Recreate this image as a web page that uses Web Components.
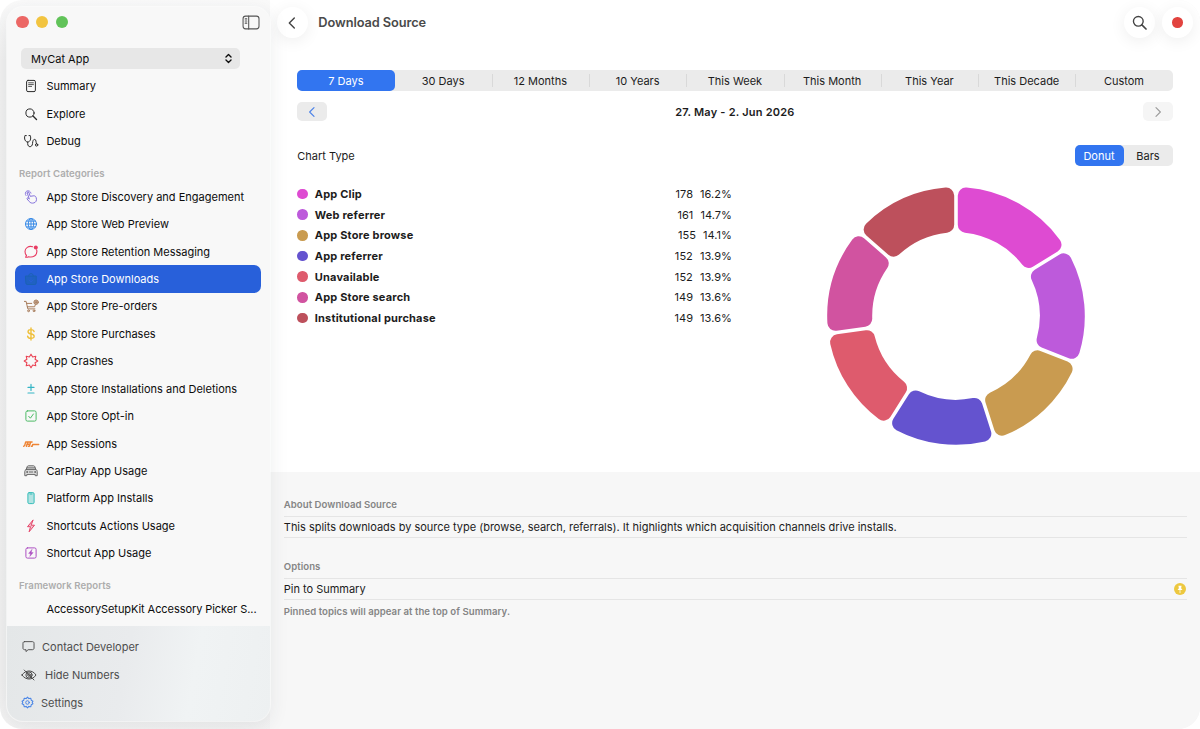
<!DOCTYPE html>
<html lang="en">
<head>
<meta charset="utf-8">
<title>Download Source</title>
<style>
  body {
    margin: 0;
    background: #fff;
    font-family: Inter, "Liberation Sans", sans-serif;
    font-size: 11px;
    color: #1c1c1c;
  }
</style>
</head>
<body>
<analytics-window></analytics-window>

<script>
// 16x16 line icons, drawn with currentColor
const ICONS = {
  sidebar: '<rect x="1" y="2" width="15" height="12" rx="2.4"/><path d="M6.3 2v12M3 4.6h1.5M3 6.6h1.5M3 8.6h1.5"/>',
  summary: '<rect x="3.6" y="2.4" width="8.8" height="11.2" rx="1.4"/><path d="M5.6 4.8h4.8M5.6 6.6h4.8M5.6 8.4h3" stroke-width=".8"/>',
  search: '<circle cx="7" cy="7" r="4.1"/><path d="M10 10l3.5 3.5" stroke-width="1.4"/>',
  debug: '<path d="M3.3 2.6H1.9C.9 5.9 2.3 9 4.7 9S8.4 5.9 7.3 2.6H6M4.7 9v1.7c0 4 4.5 4 4.8 0 .2-3 .9-4.3 2.1-4.3 2 0 .8 3 2.2 4.8"/><circle cx="13.6" cy="11.9" r="1.2"/>',
  tap: '<path d="M6.2 9.8L4.5 4.7c-.4-1.3 1.2-1.8 1.6-.6l1.1 3.2 3.7-.5c1.2 0 2 .8 2.3 1.9.9 3-.5 4.7-2.3 5.2-2 .6-3.6 0-4.7-1.4L4.1 10c-.6-.9.5-1.6 1.2-1z"/><path d="M3 6.6A2.9 2.9 0 1 1 8 4.2M3.9 4.2a1.3 1.3 0 0 1 2.3-.9" stroke-width=".9"/>',
  globe: '<circle cx="8" cy="8" r="5.5"/><ellipse cx="8" cy="8" rx="2.7" ry="5.5"/><path d="M8 2.5v11M2.5 8h11M3.5 5.1h9M3.5 10.9h9"/>',
  message: '<path d="M9.7 2.7C5.5 1.5 2 4 2 7.6c0 1.7.6 3 1.5 3.9L2.6 13.3c1.2.1 2.3-.2 3-.6 4.4 1.2 8.3-1.2 8.3-5.1 0-.7-.1-1.3-.3-1.8" stroke-width="1.1"/><circle cx="12.8" cy="3.4" r="2" fill="currentColor" stroke="none"/>',
  bag: '<path d="M2.8 5h10.4v7a1.5 1.5 0 0 1-1.5 1.5H4.3A1.5 1.5 0 0 1 2.8 12z" fill="currentColor" fill-opacity=".6"/><path d="M5.6 5a2.4 2.4 0 0 1 4.8 0"/><path d="M8 6.5v4.5M6 9l2 2 2-2" stroke="#2860da" stroke-opacity=".7"/>',
  cart: '<path d="M1.4 3.4h1.7l1.7 7.5h7.1M3.7 5.4h5M4.3 8.8h7.3l.7-2"/><circle cx="5.5" cy="12.8" r=".9"/><circle cx="11" cy="12.8" r=".9"/><circle cx="13.1" cy="4.2" r="2.2" fill="currentColor" fill-opacity=".4"/><path d="M13.1 3v2.4M11.9 4.2h2.4"/>',
  dollar: '<path d="M11.1 5.6C10.8 4.3 9.7 3.6 8 3.6c-3.8 0-4 3.5-.3 4.2 4.7.8 4.4 4.6.4 4.6-2 0-3.3-.8-3.5-2.3M8 2v12" stroke-width="1.4"/>',
  burst: '<path d="M8 1.2L9.68 3.93 12.8 3.2 12.07 6.32 14.8 8 12.07 9.68 12.8 12.8 9.68 12.07 8 14.8 6.32 12.07 3.2 12.8 3.93 9.68 1.2 8 3.93 6.32 3.2 3.2 6.32 3.93z" stroke-width="1.1"/>',
  plusminus: '<path d="M8 3.4v6M5 6.4h6M5 12h6" stroke-width="1.2"/>',
  check: '<rect x="2.9" y="2.9" width="10.2" height="10.2" rx="1.5"/><path d="M5.7 8.3l1.7 1.9 3-4.2"/>',
  hare: '<path d="M.7 10.3l1-.9 1-3.4h6.4M3.400 10.300l.7-2.300M5.300 10.300h1l1.300-3.700M4.800 6.400l-.6 1.800h2.600M8.300 10.200h1l.4-1.700h6" stroke-width="1.4"/>',
  car: '<path d="M3.2 6.6l1-2.900c.2-.6.600-.9 1.200-.9h5.200c.6 0 1 .3 1.200.9l1 2.900c1 .4 1.400 1 1.400 2v4.100h-2v-1.300H3.800v1.300h-2V8.600c0-1 .4-1.600 1.400-2zM3.200 6.600h9.600M6.200 9h3.600M4.200 4.900h7.600" fill="currentColor" fill-opacity=".15"/><circle cx="4" cy="9" r=".5"/><circle cx="12" cy="9" r=".5"/>',
  phone: '<rect x="4.9" y="2.6" width="6.2" height="11" rx="1.3" fill="currentColor" fill-opacity=".35"/><path d="M7 4h2"/>',
  bolt: '<path d="M9.9 2.2L4.5 8.7h3l-1.4 5.1 5.4-6.6h-3z" fill="currentColor" fill-opacity=".3"/>',
  boltbox: '<rect x="2.9" y="2.9" width="10.2" height="10.2" rx="1.5"/><path d="M8.900 4.500L5.600 8.400h1.900l-.7 3.100 3.400-3.900H8.300z" fill="currentColor" stroke-width=".4"/>',
  bubble: '<path d="M3.8 2.8h8.4c1 0 1.7.7 1.7 1.7v5.2c0 1-.7 1.7-1.7 1.7H7.6l-2.3 2v-2H3.8c-1 0-1.7-.7-1.7-1.7V4.500c0-1 .7-1.700 1.700-1.700z"/>',
  eye: '<path d="M1 8c3.5-5.4 10.5-5.4 14 0-3.5 5.4-10.5 5.4-14 0z"/><circle cx="8" cy="8" r="3.1"/><circle cx="8" cy="8" r="1.3"/><path d="M3.2 3l9.8 10"/>',
  gear: '<path d="M8 1.3l1.6 1.9 2.4-.5.6 2.5 2.1 1.2L13.8 8l.9 1.6-2.1 1.2-.6 2.5-2.4-.5L8 14.7l-1.6-1.9-2.4.5-.6-2.5-2.1-1.2L2.2 8l-.9-1.6 2.1-1.2.6-2.5 2.4.5z" stroke-width="1.3"/><circle cx="8" cy="8" r="2.2" stroke-width="1.2"/>',
  left: '<path d="M10.3 3L5.3 8l5 5"/>',
  right: '<path d="M5.7 3l5 5-5 5"/>',
  updown: '<path d="M4.9 6.100L8 3.200l3.100 2.900M4.900 9.900L8 12.800l3.100-2.900"/>',
  pin: '<circle cx="8" cy="8" r="8" fill="currentColor" stroke="none"/><path d="M5.9 3.6h4.2l-.6 3.4 1.8 2.3H4.7L6.5 7z" fill="#fff" stroke="none"/><path d="M8 9v4" stroke="#fff"/>',
};

class UiIcon extends HTMLElement {
  connectedCallback() {
    const size = this.getAttribute('size') || 16;
    const weight = this.getAttribute('weight') || 1;
    this.attachShadow({ mode: 'open' }).innerHTML = `
      <style>
        :host { display: inline-flex; flex: none; }
        svg { display: block; overflow: visible; }
      </style>
      <svg width="${size}" height="${size}" viewBox="0 0 16 16" fill="none" stroke="currentColor"
        stroke-width="${weight}" stroke-linecap="round" stroke-linejoin="round">${ICONS[this.getAttribute('name')] || ''}</svg>
    `;
  }
}

class NavRow extends HTMLElement {
  connectedCallback() {
    const icon = this.getAttribute('icon');
    this.attachShadow({ mode: 'open' }).innerHTML = `
      <style>
        :host {
          display: flex;
          align-items: center;
          height: 27.44px;
          margin: 0 9px 0 8.4px;
          padding-left: 8.1px;
          border-radius: 7px;
          color: #0c0c0c;
          white-space: nowrap;
        }
        :host([selected]) { background: #2860da; color: #fff; }
        .icon { flex: none; width: 16px; height: 16px; margin-right: 6.9px; color: ${this.getAttribute('tint') || '#2b2b2b'}; }
      </style>
      <span class="icon">${icon ? `<ui-icon name="${icon}"></ui-icon>` : ''}</span>
      <slot></slot>
    `;
  }
}

class SideBar extends HTMLElement {
  connectedCallback() {
    this.attachShadow({ mode: 'open' }).innerHTML = `
      <style>
        :host {
          position: relative;
          z-index: 1;
          display: flex;
          flex-direction: column;
          flex: none;
          box-sizing: border-box;
          width: 263px;
          margin: 7px 0 8px 7px;
          border-radius: 16px;
          background: #f8f8f8;
          box-shadow: 0 0 0 1px rgba(255,255,255,.5), 0 5px 20px rgba(40,60,70,.09);
          overflow: hidden;
        }
        header { display: flex; align-items: center; height: 30px; padding: 0 11.5px 0 9px; margin-bottom: 11px; }
        .light { width: 12.5px; height: 12.5px; margin-right: 7.3px; border-radius: 50%; }
        header ui-icon { margin-left: auto; color: #555; }
        .picker {
          display: flex;
          align-items: center;
          justify-content: space-between;
          height: 21px;
          margin: 0 30px 3.6px 14px;
          padding: 0 5.5px 0 10px;
          border-radius: 5px;
          background: #e7e7e7;
          color: #0c0c0c;
        }
        h2 {
          margin: 0;
          height: 18px;
          padding: 10px 0 0 12px;
          font-size: 9.6px;
          font-weight: 600;
          line-height: 18px;
          letter-spacing: .08px;
          color: #adadad;
        }
        footer {
          display: flex;
          flex-direction: column;
          justify-content: space-between;
          box-sizing: border-box;
          height: 95px;
          margin-top: auto;
          padding: 12.5px 13.5px 10.5px;
          background: linear-gradient(100deg, #e4e7e8, #e9ebed 45%, #f0f3f4 70%, #edf0f1);
          color: #4d4d4d;
        }
        footer div { display: flex; align-items: center; height: 16px; }
      </style>
      <header>
        <span class="light" style="background:#ec6765"></span>
        <span class="light" style="background:#f2c440"></span>
        <span class="light" style="background:#61c359"></span>
        <ui-icon name="sidebar" size="17"></ui-icon>
      </header>
      <div class="picker"><span>MyCat App</span><ui-icon name="updown" size="13" weight="1.7"></ui-icon></div>
      <nav-row icon="summary">Summary</nav-row>
      <nav-row icon="search">Explore</nav-row>
      <nav-row icon="debug">Debug</nav-row>
      <h2>Report Categories</h2>
      <nav-row icon="tap" tint="#8471dc">App Store Discovery and Engagement</nav-row>
      <nav-row icon="globe" tint="#3a8ce8">App Store Web Preview</nav-row>
      <nav-row icon="message" tint="#e83b62">App Store Retention Messaging</nav-row>
      <nav-row icon="bag" tint="#1b62b4" selected>App Store Downloads</nav-row>
      <nav-row icon="cart" tint="#a87d5c">App Store Pre-orders</nav-row>
      <nav-row icon="dollar" tint="#efc03c">App Store Purchases</nav-row>
      <nav-row icon="burst" tint="#ea4354">App Crashes</nav-row>
      <nav-row icon="plusminus" tint="#35b5c5">App Store Installations and Deletions</nav-row>
      <nav-row icon="check" tint="#4dbb66">App Store Opt-in</nav-row>
      <nav-row icon="hare" tint="#ee8434">App Sessions</nav-row>
      <nav-row icon="car" tint="#666">CarPlay App Usage</nav-row>
      <nav-row icon="phone" tint="#35bdb9">Platform App Installs</nav-row>
      <nav-row icon="bolt" tint="#e5476b">Shortcuts Actions Usage</nav-row>
      <nav-row icon="boltbox" tint="#ad4fc3">Shortcut App Usage</nav-row>
      <h2>Framework Reports</h2>
      <nav-row style="letter-spacing:-.07px">AccessorySetupKit Accessory Picker S...</nav-row>
      <footer>
        <div><ui-icon name="bubble" size="15" style="margin-right:6.5px"></ui-icon>Contact Developer</div>
        <div><ui-icon name="eye" style="margin-right:8.5px"></ui-icon>Hide Numbers</div>
        <div><ui-icon name="gear" size="13" style="margin-right:7.5px;color:#4b86e6"></ui-icon>Settings</div>
      </footer>
    `;
  }
}

class SegmentControl extends HTMLElement {
  connectedCallback() {
    const items = this.getAttribute('items').split('|');
    this.attachShadow({ mode: 'open' }).innerHTML = `
      <style>
        :host { display: flex; height: 21px; border-radius: 5px; background: #ebebeb; }
        span {
          position: relative;
          flex: 1 1 0;
          text-align: center;
          line-height: 22px;
          white-space: nowrap;
        }
        span:first-of-type { border-radius: 5px; background: #3275f0; color: #fff; }
        /* hairline between unselected segments */
        span:nth-of-type(n+3)::before {
          content: '';
          position: absolute;
          left: 0;
          top: 4px;
          width: 1px;
          height: 13px;
          background: #d9d9d9;
        }
      </style>
      ${items.map(item => `<span>${item}</span>`).join('')}
    `;
  }
}

const SOURCES = [
  { name: 'App Clip', count: 178, share: '16.2%', color: '#de4bd2' },
  { name: 'Web referrer', count: 161, share: '14.7%', color: '#bd5adb' },
  { name: 'App Store browse', count: 155, share: '14.1%', color: '#c99b50' },
  { name: 'App referrer', count: 152, share: '13.9%', color: '#6453cf' },
  { name: 'Unavailable', count: 152, share: '13.9%', color: '#de5b6d' },
  { name: 'App Store search', count: 149, share: '13.6%', color: '#d153a0' },
  { name: 'Institutional purchase', count: 149, share: '13.6%', color: '#bd505c' },
];

class DonutChart extends HTMLElement {
  connectedCallback() {
    const total = SOURCES.reduce((sum, s) => sum + s.count, 0);
    let angle = 0;
    const paths = SOURCES.map(s => {
      const start = angle;
      angle += s.count / total * Math.PI * 2;
      return `<path fill="${s.color}" d="${this.sector(start, angle)}"/>`;
    });
    this.attachShadow({ mode: 'open' }).innerHTML = `
      <style>:host { display: block; } svg { display: block; }</style>
      <svg width="258" height="258" viewBox="-129 -129 258 258">${paths.join('')}</svg>
    `;
  }

  // ring sector with rounded corners; the gap stays parallel along each edge
  sector(a, b) {
    const R = 128.8, r = 83.8, gap = 1.8, c = 8;
    const pt = (rad, ang) => `${(rad * Math.sin(ang)).toFixed(2)} ${(-rad * Math.cos(ang)).toFixed(2)}`;
    const outer = Math.asin((gap + c) / (R - c));
    const inner = Math.asin((gap + c) / (r + c));
    const edge = (dist, base, side) => {
      const along = Math.sqrt(dist * dist - (gap + c) * (gap + c));
      return pt(Math.hypot(along, gap), base + side * Math.atan2(gap, along));
    };
    return `M${edge(R - c, a, 1)}A${c} ${c} 0 0 1 ${pt(R, a + outer)}` +
      `A${R} ${R} 0 0 1 ${pt(R, b - outer)}A${c} ${c} 0 0 1 ${edge(R - c, b, -1)}` +
      `L${edge(r + c, b, -1)}A${c} ${c} 0 0 1 ${pt(r, b - inner)}` +
      `A${r} ${r} 0 0 0 ${pt(r, a + inner)}A${c} ${c} 0 0 1 ${edge(r + c, a, 1)}Z`;
  }
}

class SourceLegend extends HTMLElement {
  connectedCallback() {
    this.attachShadow({ mode: 'open' }).innerHTML = `
      <style>
        :host { display: block; }
        div { display: flex; align-items: center; height: 20.72px; }
        i { width: 10.5px; height: 10.5px; margin-right: 7px; border-radius: 50%; }
        b { flex: 1; font-weight: 700; letter-spacing: .18px; }
        span { margin-left: 7px; letter-spacing: .05px; }
      </style>
      ${SOURCES.map(s => `<div><i style="background:${s.color}"></i><b>${s.name}</b><span>${s.count}</span><span>${s.share}</span></div>`).join('')}
    `;
  }
}

class InfoSection extends HTMLElement {
  connectedCallback() {
    this.attachShadow({ mode: 'open' }).innerHTML = `
      <style>
        :host { display: block; }
        h3, p { margin: 0; font-size: 9.6px; font-weight: 600; line-height: 12px; color: #858585; letter-spacing: .05px; }
        .row {
          display: flex;
          align-items: center;
          justify-content: space-between;
          height: 20px;
          margin-top: 5px;
          border: solid #e5e5e5;
          border-width: 1px 0;
          letter-spacing: -.015px;
        }
        p { margin-top: 6px; }
      </style>
      <h3>${this.getAttribute('heading')}</h3>
      <div class="row"><slot></slot></div>
      ${this.hasAttribute('note') ? `<p>${this.getAttribute('note')}</p>` : ''}
    `;
  }
}

class AnalyticsWindow extends HTMLElement {
  connectedCallback() {
    this.attachShadow({ mode: 'open' }).innerHTML = `
      <style>
        :host {
          display: flex;
          box-sizing: border-box;
          width: 1200px;
          height: 729px;
          border-radius: 22px;
          overflow: hidden;
          background: linear-gradient(#fafafa, #f0f0f0 60px, #efefef 680px, #f3f3f3);
        }
        main { display: flex; flex-direction: column; flex: 1; background: #f7f7f7; }
        .report { box-sizing: border-box; height: 472px; padding: 7px 27.5px 0 27.3px; background: #fff; }
        header { display: flex; align-items: center; gap: 7px; height: 31px; margin: 0 -20.5px 32px; }
        h1 { flex: 1; margin: 0 0 0 3.5px; font-size: 12.8px; font-weight: 600; color: #4a4a4a; letter-spacing: -.08px; }
        .round {
          display: flex;
          align-items: center;
          justify-content: center;
          width: 31px;
          height: 31px;
          border-radius: 50%;
          background: #fff;
          color: #444;
          box-shadow: 0 3px 16px rgba(0,0,0,.07);
        }
        .dot { width: 10.5px; height: 10.5px; border-radius: 50%; background: #e2433f; }
        .line { display: flex; align-items: center; justify-content: space-between; }
        .dates { height: 19px; margin: 11px 0 23.5px; font-weight: 600; letter-spacing: .22px; }
        .step {
          display: flex;
          align-items: center;
          justify-content: center;
          width: 29.5px;
          height: 19px;
          border-radius: 5px;
          background: #ebebeb;
          color: #4b82e8;
        }
        .step.off { background: #f5f5f5; color: #9c9c9c; }
        .type { line-height: 22px; }
        .type segment-control { width: 98px; }
        .chart { display: grid; grid-template-columns: 1fr 1fr; column-gap: 6px; align-items: start; padding-top: 17px; }
        donut-chart { justify-self: center; padding: 3px 0 0 1.5px; }
        .info { display: flex; flex-direction: column; gap: 23px; padding: 26.5px 13px 0 13.8px; }
      </style>
      <side-bar></side-bar>
      <main>
        <div class="report">
          <header>
            <span class="round"><ui-icon name="left" size="16" weight="1.4"></ui-icon></span>
            <h1>Download Source</h1>
            <span class="round"><ui-icon name="search" size="19" weight="1.15"></ui-icon></span>
            <span class="round"><span class="dot"></span></span>
          </header>
          <segment-control items="7 Days|30 Days|12 Months|10 Years|This Week|This Month|This Year|This Decade|Custom"></segment-control>
          <div class="line dates">
            <span class="step"><ui-icon name="left" size="14" weight="1.3"></ui-icon></span>
            <span>27. May - 2. Jun 2026</span>
            <span class="step off"><ui-icon name="right" size="14" weight="1.3"></ui-icon></span>
          </div>
          <div class="line type">
            <span>Chart Type</span>
            <segment-control items="Donut|Bars"></segment-control>
          </div>
          <div class="chart">
            <source-legend></source-legend>
            <donut-chart></donut-chart>
          </div>
        </div>
        <div class="info">
          <info-section heading="About Download Source">This splits downloads by source type (browse, search, referrals). It highlights which acquisition channels drive installs.</info-section>
          <info-section heading="Options" note="Pinned topics will appear at the top of Summary.">Pin to Summary<ui-icon name="pin" size="12" style="color:#edc83f;margin-right:1px"></ui-icon></info-section>
        </div>
      </main>
    `;
  }
}

customElements.define('ui-icon', UiIcon);
customElements.define('nav-row', NavRow);
customElements.define('side-bar', SideBar);
customElements.define('segment-control', SegmentControl);
customElements.define('donut-chart', DonutChart);
customElements.define('source-legend', SourceLegend);
customElements.define('info-section', InfoSection);
customElements.define('analytics-window', AnalyticsWindow);
</script>
</body>
</html>
